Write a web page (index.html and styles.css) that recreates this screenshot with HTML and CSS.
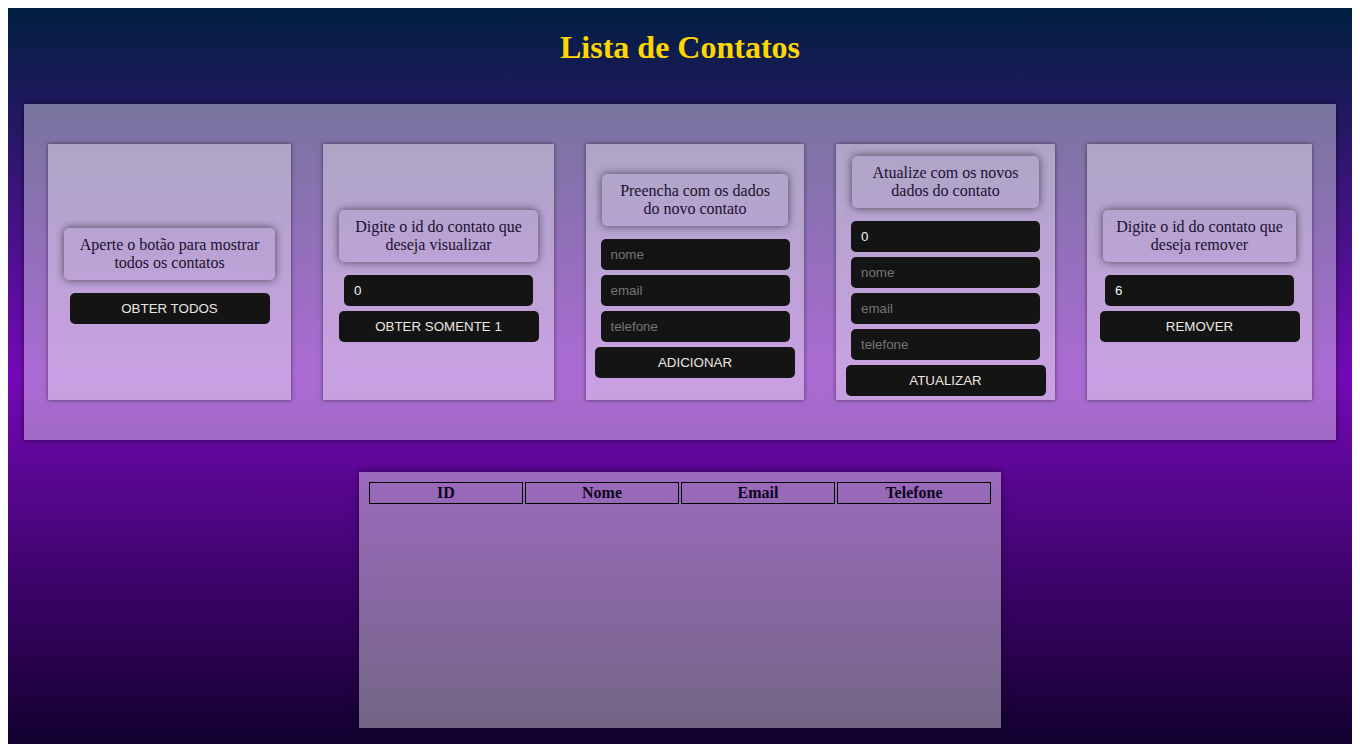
FILE: index.html
```html
<!DOCTYPE html>
<html lang="pt-BR">
<head>
<meta charset="utf-8">
<title>Lista de Contatos</title>
<link rel="stylesheet" href="styles.css">
</head>
<body>
<div class="app">
  <h1 class="title">Lista de Contatos</h1>
  <section class="panel">
    <div class="card card-1">
      <p class="desc">Aperte o botão para mostrar todos os contatos</p>
      <button class="btn">OBTER TODOS</button>
    </div>
    <div class="card card-2">
      <p class="desc">Digite o id do contato que deseja visualizar</p>
      <input class="field" type="text" value="0">
      <button class="btn">OBTER SOMENTE 1</button>
    </div>
    <div class="card card-3">
      <p class="desc">Preencha com os dados do novo contato</p>
      <input class="field" type="text" placeholder="nome">
      <input class="field" type="text" placeholder="email">
      <input class="field" type="text" placeholder="telefone">
      <button class="btn">ADICIONAR</button>
    </div>
    <div class="card card-4">
      <p class="desc">Atualize com os novos dados do contato</p>
      <input class="field" type="text" value="0">
      <input class="field" type="text" placeholder="nome">
      <input class="field" type="text" placeholder="email">
      <input class="field" type="text" placeholder="telefone">
      <button class="btn">ATUALIZAR</button>
    </div>
    <div class="card card-5">
      <p class="desc">Digite o id do contato que deseja remover</p>
      <input class="field" type="text" value="6">
      <button class="btn">REMOVER</button>
    </div>
  </section>
  <section class="table-box">
    <table class="contacts">
      <thead>
        <tr>
          <th>ID</th>
          <th>Nome</th>
          <th>Email</th>
          <th>Telefone</th>
        </tr>
      </thead>
      <tbody></tbody>
    </table>
  </section>
</div>
</body>
</html>
```
FILE: styles.css
```css
html, body {
  background: #ffffff;
}
body {
  margin: 8px;
  font-family: "Liberation Serif", "Times New Roman", serif;
}
.app {
  padding: 16px;
  background: linear-gradient(to bottom, #001f3f 0%, #7409b7 50%, #12002e 100%);
}
.title {
  margin: 5px 0 0;
  font-size: 32px;
  font-weight: bold;
  line-height: normal;
  text-align: center;
  color: #ffd700;
}
.panel {
  margin: 38px 0 32px;
  padding: 40px 24px;
  display: flex;
  gap: 32px;
  background: rgba(255, 255, 255, 0.4);
  box-shadow: 0 0 5px rgba(0, 0, 0, 0.5);
}
.card {
  height: 256px;
  box-sizing: border-box;
  padding-top: 7px;
  display: flex;
  flex-direction: column;
  align-items: center;
  justify-content: center;
  gap: 5px;
  background: rgba(255, 255, 255, 0.36);
  box-shadow: 0 0 4px rgba(0, 0, 0, 0.55);
}
.card-1 { width: 243px; }
.card-2 { width: 231px; }
.card-3 { width: 218px; }
.card-4 { width: 219px; }
.card-5 { width: 225px; }
.desc {
  align-self: stretch;
  margin: 0 16px 8px;
  padding: 8px 10px;
  border-radius: 5px;
  font-size: 16px;
  line-height: normal;
  text-align: center;
  color: #1a1030;
  box-shadow: 0 0 9px rgba(0, 0, 0, 0.6);
}
.field {
  box-sizing: border-box;
  width: 189px;
  height: 31px;
  margin: 0;
  padding: 0 10px;
  border: none;
  border-radius: 5px;
  background: #141414;
  color: #f2f2f2;
  font-family: "Liberation Sans", Arial, sans-serif;
  font-size: 13.333px;
  outline: none;
}
.field::placeholder {
  color: #767676;
}
.btn {
  box-sizing: border-box;
  width: 200px;
  height: 31px;
  margin: 0;
  padding: 0;
  border: none;
  border-radius: 5px;
  background: #141414;
  color: #ebe6e0;
  font-family: "Liberation Sans", Arial, sans-serif;
  font-size: 13.333px;
  cursor: pointer;
}
.table-box {
  box-sizing: border-box;
  width: 642px;
  height: 256px;
  margin: 0 auto;
  padding: 8px;
  background: rgba(255, 255, 255, 0.4);
  box-shadow: 0 0 8px rgba(0, 0, 0, 0.45);
}
.contacts {
  width: 100%;
  border-spacing: 2px;
  table-layout: fixed;
}
.contacts th {
  padding: 1px;
  border: 1px solid #000000;
  font-size: 16px;
  font-weight: bold;
  color: #0d0520;
  text-align: center;
}
```
